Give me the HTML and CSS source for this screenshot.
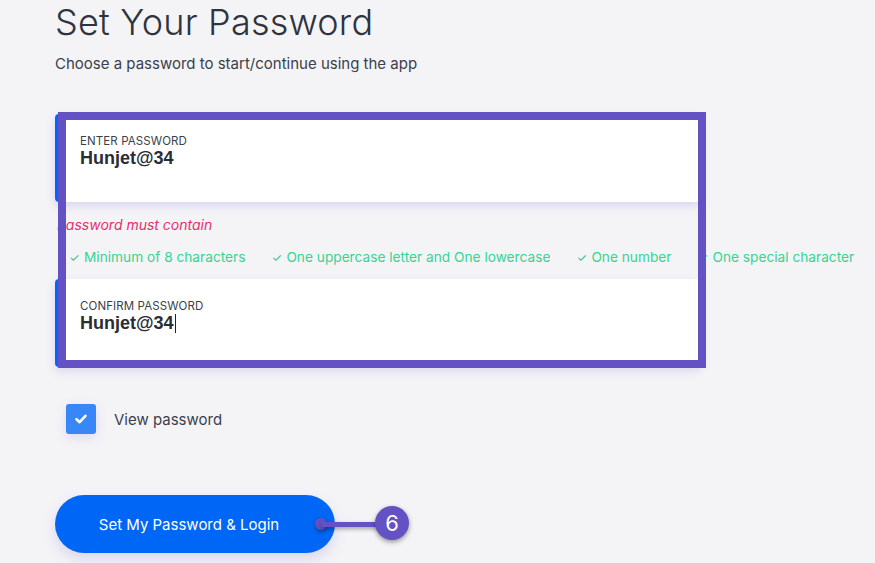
FILE: index.html
```html
<!DOCTYPE html>
<html lang="en">
<head>
<meta charset="utf-8">
<title>Set Your Password</title>
<link rel="stylesheet" href="styles.css">
</head>
<body>
<main class="page">
  <h1 class="title">Set Your Password</h1>
  <p class="subtitle">Choose a password to start/continue using the app</p>

  <section class="form">
    <div class="field">
      <label class="field-label">ENTER PASSWORD</label>
      <div class="field-value">Hunjet@34</div>
    </div>
    <div class="rules">
      <p class="rules-title">Password must contain</p>
      <ul class="rules-list">
        <li class="rule"><span class="tick">✓</span>Minimum of 8 characters</li>
        <li class="rule"><span class="tick">✓</span>One uppercase letter and One lowercase</li>
        <li class="rule"><span class="tick">✓</span>One number</li>
        <li class="rule"><span class="tick">✓</span>One special character</li>
      </ul>
    </div>
    <div class="field">
      <label class="field-label">CONFIRM PASSWORD</label>
      <div class="field-value">Hunjet@34<span class="caret"></span></div>
    </div>
    <div class="highlight"></div>
  </section>

  <div class="view">
    <span class="checkbox">
      <svg width="14" height="14" viewBox="0 0 14 14"><path d="M2.5 7.2 L5.6 10.2 L11.5 3.8" fill="none" stroke="#fff" stroke-width="2.6" stroke-linecap="round" stroke-linejoin="round"/></svg>
    </span>
    <span class="view-label">View password</span>
  </div>

  <div class="actions">
    <button class="submit">Set My Password &amp; Login</button>
    <div class="callout">
      <span class="callout-dot"></span>
      <span class="callout-line"></span>
      <span class="callout-badge">6</span>
    </div>
  </div>
</main>
</body>
</html>
```

FILE: styles.css
```css
* { box-sizing: border-box; }
html, body { margin: 0; padding: 0; }
body {
  background: #f4f4f7;
  font-family: Inter, "Noto Sans", sans-serif;
  color: #363b47;
  width: 875px;
  height: 563px;
  overflow: hidden;
}
.page {
  padding-left: 55px;
}
.title {
  margin: 0;
  font-size: 36px;
  line-height: 44px;
  font-weight: 300;
  color: #2f333d;
  letter-spacing: 0.2px;
}
.subtitle {
  margin: 10px 0 0;
  font-size: 15px;
  line-height: 20px;
  color: #3a3f4b;
}
.form {
  position: relative;
  margin-top: 40px;
  width: 645px;
}
.field {
  background: #fff;
  border-left: 3px solid #0066ff;
  border-radius: 4px;
  height: 88px;
  padding: 20px 0 0 22px;
  box-shadow: 0 4px 10px rgba(100, 80, 194, 0.18);
  position: relative;
}
.field-label {
  display: block;
  font-size: 11.5px;
  line-height: 14px;
  color: #3a3f4b;
  letter-spacing: 0.1px;
}
.field-value {
  font-family: "Liberation Sans", Arial, sans-serif;
  font-weight: 700;
  font-size: 18px;
  line-height: 21px;
  color: #2a2d34;
  display: flex;
  align-items: center;
}
.caret {
  display: inline-block;
  width: 1px;
  height: 19px;
  background: #222;
  margin-left: 1px;
}
.rules {
  height: 77px;
  padding-top: 14px;
}
.rules-title {
  margin: 0 0 0 2px;
  font-size: 14px;
  line-height: 18px;
  font-style: italic;
  color: #e6306e;
}
.rules-list {
  list-style: none;
  margin: 15px 0 0;
  padding: 0 0 0 14px;
  display: flex;
  white-space: nowrap;
}
.rule {
  font-size: 13.7px;
  line-height: 16px;
  color: #39d391;
  margin-right: 26px;
}
.tick {
  display: inline-block;
  width: 15px;
  font-size: 12px;
  color: #2fc485;
}
.highlight {
  position: absolute;
  left: 3px;
  top: -2px;
  width: 648px;
  height: 256px;
  border: 8px solid #6451c4;
  pointer-events: none;
}
.view {
  display: flex;
  align-items: center;
  margin-top: 37px;
  padding-left: 11px;
}
.checkbox {
  width: 30px;
  height: 30px;
  border-radius: 3px;
  background: #3787f6;
  display: flex;
  align-items: center;
  justify-content: center;
  box-shadow: 0 4px 12px rgba(100, 80, 194, 0.15);
}
.view-label {
  margin-left: 18px;
  font-size: 15px;
  color: #3a3f4b;
}
.actions {
  position: relative;
  margin-top: 61px;
}
.submit {
  width: 280px;
  height: 58px;
  border: none;
  border-radius: 29px;
  background: #0066f5;
  color: #fff;
  font-family: Inter, "Noto Sans", sans-serif;
  font-size: 15px;
  padding: 0 12px 0 0;
  box-shadow: 0 6px 14px rgba(100, 80, 194, 0.18);
}
.callout {
  position: absolute;
  left: 260px;
  top: 12px;
  width: 100px;
  height: 34px;
}
.callout-dot {
  position: absolute;
  left: 0;
  top: 11px;
  width: 12px;
  height: 12px;
  border-radius: 50%;
  background: #6451c4;
  box-shadow: 0 2px 4px rgba(0,0,0,0.35);
}
.callout-line {
  position: absolute;
  left: 6px;
  top: 15px;
  width: 60px;
  height: 5px;
  background: #6451c4;
  box-shadow: 0 2px 4px rgba(0,0,0,0.35);
}
.callout-badge {
  position: absolute;
  left: 60px;
  top: -1px;
  width: 34px;
  height: 34px;
  border-radius: 50%;
  background: #6451c4;
  color: #fff;
  font-size: 22px;
  line-height: 34px;
  text-align: center;
  box-shadow: 0 2px 5px rgba(0,0,0,0.4);
}
```
